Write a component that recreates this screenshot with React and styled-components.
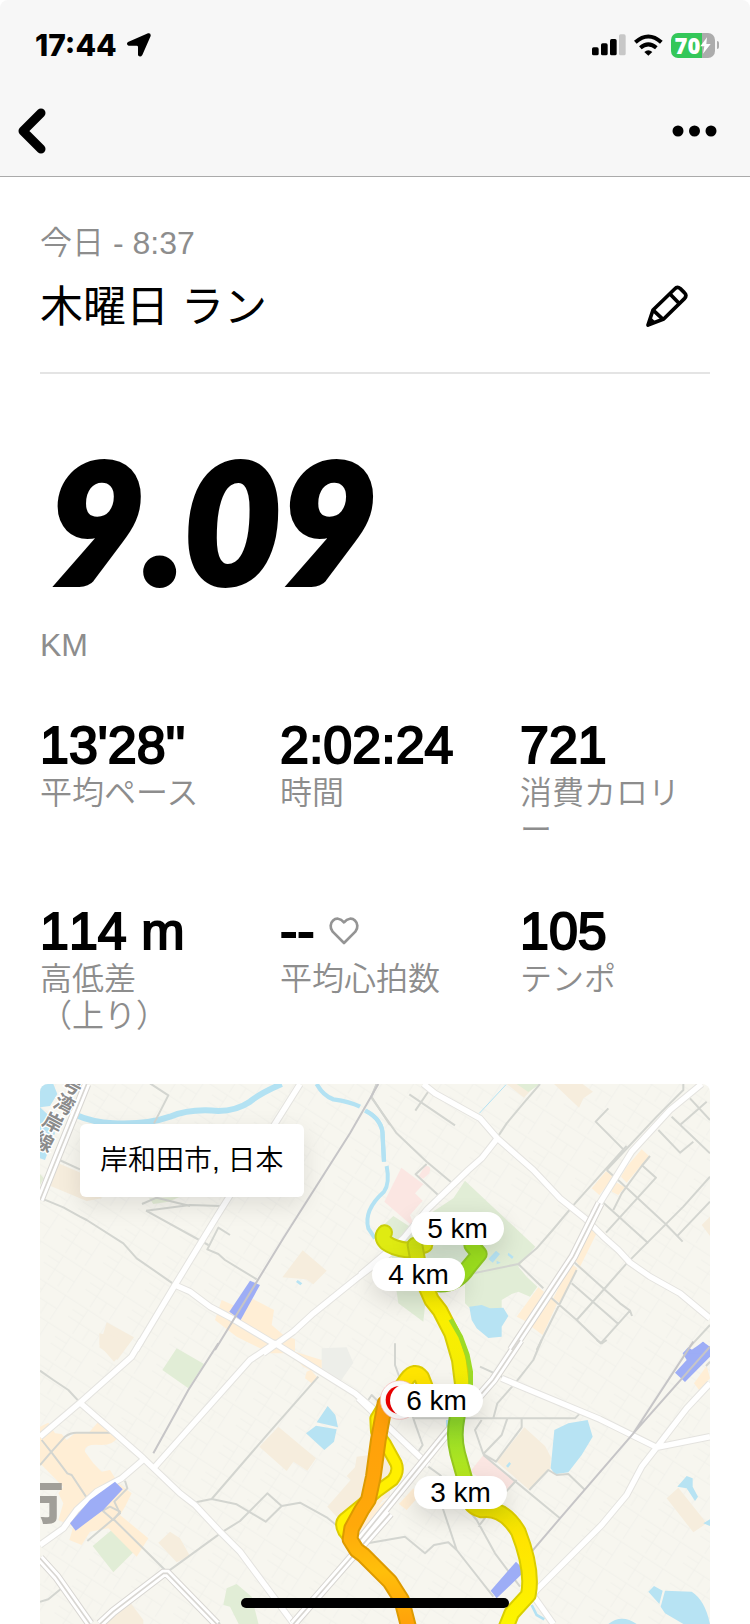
import React from "react";
import styled, { createGlobalStyle } from "styled-components";

const stats = [
  { value: "13'28''", label: "平均ペース" },
  { value: "2:02:24", label: "時間" },
  { value: "721", label: "消費カロリー" },
  { value: "114 m", label: "高低差\n（上り）" },
  { value: "--", label: "平均心拍数", heart: true },
  { value: "105", label: "テンポ" },
];

// positions on the 670 x 540 map
const markers = [
  { text: "5 km", x: 371, y: 128 },
  { text: "4 km", x: 332, y: 174 },
  { text: "6 km", x: 350, y: 300 },
  { text: "3 km", x: 374, y: 392 },
];

// the map is drawn in four sheets, each with its own origin
const sheets = {
  nw: "translate(-30 -42)",
  ne: "translate(960 -42)",
  sw: "translate(-30 768)",
  se: "translate(960 768)",
};

const areas = [
  ["nw", "#b7e3f3", "M30 42H70L82 72L60 108L30 112ZM30 112L55 135L75 190L45 270L30 265Z"],
  ["nw", "#f6eddd", "M85 280L180 320L215 385L170 393L62 348ZM818 541L890 602L850 643L828 628L757 622Z"],
  ["nw", "#f6eddd", "M230 757L312 802L262 870L208 832Z"],
  ["nw", "#e3ecd6", "M357 385L450 380L415 395L370 402ZM30 312L42 325L30 345Z"],
  ["nw", "#ffeed5", "M575 690L620 710L665 685L732 720L725 765L760 795L795 808V850H720L620 800L555 750Z"],
  ["nw", "#b7e3f3", "M803 630L817 640L811 646L798 636Z"],
  ["ne", "#fbe6e2", "M124 293L190 343L165 370L188 392L150 435L165 475L73 395ZM180 312L195 288Q217 285 208 310L190 326L175 320Z"],
  ["ne", "#e1edd6", "M315 332L526 530L475 590L500 620L532 650L510 680L475 665L455 672L425 690V720H335L315 700V600L200 660L190 755L115 700L95 560L65 470L100 438L150 470L280 385Z"],
  ["ne", "#d9e8d3", "M200 560Q210 520 250 525H320L340 560L300 610Q220 615 200 580Z"],
  ["ne", "#b7e3f3", "M328 710L365 705L390 715L430 713L445 738L425 770V800L385 804L350 775L335 750ZM408 542L420 552L398 578L385 567ZM445 548L461 560L456 567L443 555ZM410 572L422 578L410 583Z"],
  ["ne", "#ffeed5", "M738 304L762 320L718 375L695 355ZM845 238L867 258L800 338L783 320L800 290ZM765 335L795 352L775 375L755 365ZM690 475L710 490L660 590L642 565ZM632 580L652 595L600 700L580 685ZM535 652L552 665L500 755L470 740ZM575 682L592 700L548 795L515 770Z"],
  ["ne", "#f6eddd", "M582 42H668L699 65L670 85L657 113ZM1050 440V498L1025 465ZM440 42H530L492 83Z"],
  ["ne", "#e1edd6", "M470 42H540L505 66Z"],
  ["sw", "#f6eddd", "M208 -20L305 0L252 65L208 15ZM745 260L858 355L832 392L790 365L770 393L688 320ZM420 575L450 595L480 648L440 667L385 608ZM300 787L340 840V870H230V820ZM1020 345L980 350L975 382L950 408L962 420L892 500L920 530L1080 470V345Z"],
  ["sw", "#e1edd6", "M440 25L522 72L475 145L397 90ZM245 570L325 622L250 697L188 618ZM620 732L665 770L690 870H635L600 800L580 795L590 745Z"],
  ["sw", "#edeee9", "M875 25L950 22L970 68L930 125L875 105Z"],
  ["sw", "#b7e3f3", "M893 198L916 225L924 262L860 247ZM858 257L920 268L912 305L883 330L828 280Z"],
  ["sw", "#ffeed5", "M30 260L55 248L75 280L95 282L110 300L135 280H175L205 245L265 290Q250 315 215 315Q160 310 165 335L190 370L215 395L240 390L265 430L305 460L285 500L270 525L355 595L320 650L270 600L235 565L180 575L155 615L118 600L130 560L85 540L100 490L85 460L100 440L70 410L30 370ZM830 95L842 90L862 112L845 130L825 115ZM640 0L700 10L795 0V35L875 60V108L820 80L780 40L690 22ZM1000 590L1080 490V470L1000 540Z"],
  ["se", "#fbe6e2", "M370 345L467 425L445 450L400 440L330 395Z"],
  ["se", "#f6eddd", "M493 262L555 318L572 350V385L508 450L410 365ZM955 443L1040 550L1000 577L920 475Z"],
  ["se", "#ffeed5", "M160 445L175 470L140 510L117 492ZM0 530L45 455L75 470L0 575ZM1040 78L1050 115L1017 150L1002 130Z"],
  ["se", "#b7e3f3", "M683 240L698 290L665 345L625 397L585 403L572 385L583 270L625 250ZM980 408L998 415V440L1014 470L1005 483L980 445L952 440ZM882 738L908 752L898 792L865 755ZM915 752L995 755Q1035 780 1050 852H970L915 820L902 800ZM745 852Q785 820 830 852ZM438 378L448 366L453 371L444 383ZM258 240H268V268H258ZM1030 550L1050 538V558Z"],
];

// quiet side streets
const streets = [
  ["nw", "M360 40L415 76L372 160M88 270L150 298M336 402L380 383L480 408M42 388L100 412L150 440L170 450L280 520L320 565L428 640M348 422L480 405L570 408M348 422L535 525M600 495L565 473L532 538L565 552L585 570L680 628"],
  ["nw", "M1040 42L1024 80L1080 165"],
  ["ne", "M50 42L34 82L110 190L200 275L280 342M200 282L167 313L240 380M148 73L285 166M208 60L166 122M540 42L490 100L440 160L410 205M745 115L707 155L790 238L645 400L578 480L530 535L475 582L340 610M970 42V60L890 140L740 300"],
  ["ne", "M475 582L550 655M790 238L800 228M740 300L780 335L920 465L968 515M1050 150L990 85M935 140L1050 250M895 180L960 248L1000 215M1040 95L960 165M870 258L845 288L785 370L760 420M845 285L888 323L738 488M730 398L865 520M1050 320L970 410L800 580L730 660L650 750M1050 395L950 500M635 570L780 700L810 722L722 820L650 750L570 680M635 640L775 762M650 600L590 720L530 840M1050 765L990 830M810 722L816 738M460 840L500 780"],
  ["sw", "M30 92L70 120L115 150L150 188M30 375L60 340L105 290Q120 278 140 278H245M35 300L65 338L112 400L125 405L168 470M490 488L545 477L620 493L707 545L755 498L712 460L630 543L575 577L410 697M755 498L810 488L890 532L925 560M545 477L715 280L865 110M30 785L55 778L95 745M250 537L172 603M250 537L412 697L570 852M218 512L240 500L270 515L250 540Z"],
  ["sw", "M285 422L292 445L253 485L270 520L250 537M1015 180L1025 165L1045 185"],
  ["se", "M105 10V75L125 130L165 250L188 315L175 335M205 380L240 405L350 540L405 640L480 740M160 235H645L660 220M400 235L412 190L465 130L520 60L545 0M485 235V262L408 365L370 342L345 270L365 240M442 235L425 285L370 342M360 80L470 130M370 345L600 535M508 450L565 390L590 405L625 402L675 450M10 612L135 590L195 640L222 615L265 607L290 630L400 770M240 480L290 630M355 560L420 475L470 420M710 0L725 10L740 0M1050 65L1038 78"],
];

const roads = [
  ["nw", "M810 42L560 440L435 645L318 840M435 645L480 665L540 710L600 742L730 820M700 850L790 785L850 730L980 625L1080 550"],
  ["ne", "M190 42L225 70L360 145L412 205L520 300L600 385L675 445L730 500L775 540L810 578L870 620L960 670L1050 745M412 205L365 265L325 300L200 420L130 505L0 615"],
  ["ne", "M1025 42L930 120L815 245L750 350L700 430"],
  ["sw", "M335 0L305 50L150 188L30 290M150 188L250 275L340 355L450 460L495 495L570 575L630 635L790 850M375 380L660 60L735 10L975 160L1040 215M345 355L275 415L200 455L140 510L100 565L30 615"],
  ["se", "M-5 175L205 375M425 115L520 155L720 238L890 322L1050 290M1050 130L980 205L890 322L845 380L800 465L725 555L530 750L490 800M515 760L580 852"],
];

const highways = [
  ["nw", "M170 42L90 240L30 390"],
  ["ne", "M720 400L640 560L455 840"],
  ["sw", "M30 655L80 710L180 852M210 852L250 815L400 700L412 700L560 852M790 852L1080 520"],
  ["se", "M0 600L260 280L400 120L480 0"],
];

const rails = [
  ["nw", "M1045 42L960 190L760 505L555 840"],
  ["sw", "M565 10L475 150L370 340"],
  ["se", "M1000 5L820 280L600 535L515 635M1050 20L820 280"],
];

const rivers = [
  ["nw", 18, "M130 132Q190 158 250 160Q350 165 420 140Q480 115 565 123Q620 122 660 95Q690 70 755 42"],
  ["nw", 13, "M860 42Q880 78 910 88Q960 95 990 110M1005 122Q1060 150 1058 200L1062 275"],
  ["ne", 12, "M18 122Q70 150 68 200L72 275M80 288Q90 340 72 365Q10 420 25 475L45 505"],
  ["ne", 3, "M438 44L358 130"],
  ["se", 8, "M515 795L530 825L553 838"],
];

const stations = [
  ["nw", "M660 632L690 645L632 750L598 725Z"],
  ["sw", "M255 425L278 448L220 510L137 572L120 550L180 480Z"],
  ["se", "M1028 5L1050 20V50L975 126L945 98L980 60L968 40L985 22L1000 32ZM468 665L488 685V700L410 775L392 752Z"],
  ["ne", "M1030 815L1050 835V850H980Z"],
];

const hook = "M74 488Q62 502 78 518Q100 535 140 540Q165 535 195 525";
const green = "M335 525L358 552L325 592Q290 645 235 642";
const main =
  "M165 -285L180 -200L215 -120L240 -88L275 -20L298 60L308 140L291 235Q280 290 293 340L318 430Q318 500 365 510Q430 500 475 575Q520 690 505 765L455 820L435 870";
const orange =
  "M148 870L125 780L90 725L10 645L-10 630L-30 598L-25 565L5 510L25 480L40 410L55 300L75 190";
const loop =
  "M75 190L48 235L50 275L75 310L108 370Q118 395 98 420L50 455L10 490L-45 535Q-62 550 -48 575L-20 610";
const tip = "M115 155L140 118Q165 85 185 112L200 150";

const Layer = ({ items, ...rest }) =>
  items.map(([sheet, d], i) => (
    <path key={i} d={d} transform={sheets[sheet]} fill="none" {...rest} />
  ));

const Track = ({ d, edge, color, width = 38 }) => (
  <g fill="none" strokeLinecap="round" strokeLinejoin="round">
    <path d={d} stroke={edge} strokeWidth={width + 12} />
    <path d={d} stroke={color} strokeWidth={width} />
  </g>
);

const MapDrawing = () => (
  <MapSvg viewBox="0 0 2010 1620" aria-hidden="true">
    <defs>
      <pattern id="blocks" width="150" height="96" patternUnits="userSpaceOnUse" patternTransform="rotate(33)">
        <path d="M0 10H150M40 10V96M0 58H110M110 10V96M75 58V96M0 34H40" fill="none" stroke="#efeee8" strokeWidth="2" />
      </pattern>
      <linearGradient id="main" gradientUnits="userSpaceOnUse" x1="0" y1="-285" x2="0" y2="860">
        <stop offset="0" stopColor="#cfe312" />
        <stop offset="0.15" stopColor="#fcf000" />
        <stop offset="0.36" stopColor="#f3ec04" />
        <stop offset="0.46" stopColor="#8fd92a" />
        <stop offset="0.6" stopColor="#b5e81e" />
        <stop offset="0.68" stopColor="#e6e000" />
        <stop offset="0.77" stopColor="#ffe400" />
        <stop offset="1" stopColor="#fcf600" />
      </linearGradient>
      <linearGradient id="main-edge" gradientUnits="userSpaceOnUse" x1="0" y1="-285" x2="0" y2="860">
        <stop offset="0" stopColor="#bccb12" />
        <stop offset="0.15" stopColor="#dccd00" />
        <stop offset="0.36" stopColor="#d2cc08" />
        <stop offset="0.46" stopColor="#7fc22b" />
        <stop offset="0.6" stopColor="#9dca1a" />
        <stop offset="0.7" stopColor="#dccb00" />
        <stop offset="1" stopColor="#d8d000" />
      </linearGradient>
      <linearGradient id="orange" gradientUnits="userSpaceOnUse" x1="0" y1="190" x2="0" y2="860">
        <stop offset="0" stopColor="#ff9e0a" />
        <stop offset="0.55" stopColor="#ffa90a" />
        <stop offset="0.75" stopColor="#ffbf0a" />
        <stop offset="1" stopColor="#ffa00a" />
      </linearGradient>
    </defs>
    <rect width="2010" height="1620" fill="#f7f6ef" />
    <rect width="2010" height="1620" fill="url(#blocks)" />
    {areas.map(([sheet, fill, d], i) => (
      <path key={i} d={d} fill={fill} transform={sheets[sheet]} />
    ))}
    {rivers.map(([sheet, width, d], i) => (
      <path key={i} d={d} fill="none" stroke="#b3e2f3" strokeWidth={width} transform={sheets[sheet]} />
    ))}
    <Layer items={streets} stroke="#d3d5d0" strokeWidth="6" strokeLinejoin="round" />
    <Layer items={roads} stroke="#e4e3df" strokeWidth="22" strokeLinejoin="round" />
    <Layer items={roads} stroke="#ffffff" strokeWidth="16" strokeLinejoin="round" />
    <Layer items={stations} style={{ fill: "#9dadf6" }} />
    <Layer items={rails} stroke="#c6c5c7" strokeWidth="6" />
    <Layer items={highways} stroke="#d8d6d2" strokeWidth="28" />
    <Layer items={highways} stroke="#ffffff" strokeWidth="22" />
    <Layer items={highways} stroke="#d8d6d2" strokeWidth="5" />

    <g transform={sheets.nw}>
      <RoadName transform="rotate(28 125 46)" x="97" y="66">号</RoadName>
      <RoadName transform="rotate(28 102 102)" x="73" y="124">湾</RoadName>
      <RoadName transform="rotate(28 68 158)" x="39" y="180">岸</RoadName>
      <RoadName transform="rotate(28 40 215)" x="11" y="237">線</RoadName>
    </g>
    <g transform={sheets.sw}>
      <CityName x="-76" y="558">市</CityName>
    </g>

    <g transform={sheets.ne}>
      <Track d={green} edge="#8fc924" color="#9de01f" />
      <Track d={hook} edge="#c9cf0b" color="#dfeb12" />
    </g>
    <g transform={sheets.se}>
      <Track d={main} edge="url(#main-edge)" color="url(#main)" />
      <path d="M272 -62L302 -10L322 45L332 95L332 140" fill="none" stroke="#9ddb27" strokeWidth="14" />
      <Track d={tip} edge="#dccb00" color="#ffe500" />
      <Track d={loop} edge="#dccb00" color="#fff000" width={28} />
      <Track d={orange} edge="#dd9a00" color="url(#orange)" />
      <circle cx="119" cy="180" r="58" fill="#ffffff" stroke="#f7b5b5" strokeWidth="2" />
      <circle cx="119" cy="180" r="42" fill="#ef0000" />
      <circle cx="138" cy="180" r="42" fill="#ffffff" />
    </g>
  </MapSvg>
);

const App = () => {
  return (
    <Screen>
      <GlobalStyle />
      <Header>
        <StatusBar>
          <Clock>
            17:44
            <svg width="24" height="24" viewBox="0 0 72 72" aria-hidden="true">
              <path d="M63 1Q72 -1 71 9L46 66Q40 75 33 67V42Q33 38 29 38H5Q-4 33 3 27Z" />
            </svg>
          </Clock>
          <Indicators>
            <svg width="34" height="22" viewBox="0 0 102 66" aria-hidden="true">
              <rect x="0" y="40" width="20" height="24" rx="5" />
              <rect x="27" y="28" width="20" height="36" rx="5" />
              <rect x="54" y="15" width="20" height="49" rx="5" />
              <rect x="81" y="1" width="20" height="63" rx="5" fill="#c7c7c7" />
            </svg>
            <svg width="29" height="22" viewBox="0 0 87 66" aria-hidden="true">
              <g fill="none" stroke="#000" strokeWidth="12">
                <path d="M4 25Q43 -10 82 25" />
                <path d="M19 41Q43 21 67 41" />
              </g>
              <path d="M31 54Q43 44 55 54L43 65Z" />
            </svg>
            <BatteryWrap>
              <Battery>
                70
                <svg width="11" height="17" viewBox="0 0 33 51" aria-hidden="true">
                  <path d="M21 1L1 28H13L9 50L32 21H19Z" fill="#fff" />
                </svg>
              </Battery>
              <BatteryNub />
            </BatteryWrap>
          </Indicators>
        </StatusBar>
        <NavBar>
          <IconButton aria-label="戻る">
            <svg width="28" height="46" viewBox="0 0 28 46">
              <path d="M23 5L5 23L23 41" fill="none" stroke="#000" strokeWidth="9" strokeLinecap="round" strokeLinejoin="round" />
            </svg>
          </IconButton>
          <IconButton aria-label="メニュー">
            <svg width="45" height="12" viewBox="0 0 45 12">
              <circle cx="6" cy="6" r="5.5" />
              <circle cx="22.5" cy="6" r="5.5" />
              <circle cx="39" cy="6" r="5.5" />
            </svg>
          </IconButton>
        </NavBar>
      </Header>

      <Content>
        <RunInfo>
          <div>
            <RunDate>今日 - 8:37</RunDate>
            <RunTitle>木曜日 ラン</RunTitle>
          </div>
          <IconButton aria-label="編集">
            <svg width="44" height="44" viewBox="30 28 132 132">
              <g fill="none" stroke="#000" strokeWidth="11" strokeLinejoin="round">
                <path d="M39 151L54 106L119 43Q127 34 136 42L148 54Q157 62 149 71L86 133Z" />
                <path d="M105 58L132 86M56 108L84 134" />
              </g>
              <path d="M39 151L47 127L62 142Z" />
            </svg>
          </IconButton>
        </RunInfo>

        <Distance>9.09</Distance>
        <Unit>KM</Unit>

        <StatGrid>
          {stats.map((item) => (
            <div key={item.label}>
              <StatValue>
                {item.value}
                {item.heart && (
                  <svg width="30" height="28" viewBox="0 0 90 84" aria-hidden="true">
                    <path
                      d="M45 78L11 44C-8 20 22 -12 45 16C68 -12 98 20 79 44Z"
                      fill="none"
                      stroke="#949494"
                      strokeWidth="8"
                      strokeLinejoin="round"
                    />
                  </svg>
                )}
              </StatValue>
              <StatLabel>{item.label}</StatLabel>
            </div>
          ))}
        </StatGrid>

        <MapCard>
          <MapDrawing />
          <CityTag>岸和田市, 日本</CityTag>
          {markers.map((m) => (
            <Marker key={m.text} $x={m.x} $y={m.y}>
              {m.text}
            </Marker>
          ))}
        </MapCard>
      </Content>
      <HomeIndicator />
    </Screen>
  );
};

const GlobalStyle = createGlobalStyle`
  * {
    box-sizing: border-box;
  }
  body {
    margin: 0;
    background: #fff;
    color: #000;
    font-family: "Liberation Sans", "Noto Sans CJK JP", sans-serif;
  }
  svg {
    display: block;
  }
`;

const Screen = styled.main`
  min-height: 100vh;
`;

const Header = styled.header`
  height: 177px;
  background-color: #f7f7f7;
  border-bottom: 1px solid #aaa;
  border-radius: 8px 8px 0 0;
`;

const StatusBar = styled.div`
  display: flex;
  align-items: center;
  justify-content: space-between;
  height: 90px;
  padding: 0 31px 0 35px;
`;

const Clock = styled.div`
  display: flex;
  align-items: center;
  gap: 10px;
  font-family: Inter, sans-serif;
  font-size: 30px;
  font-weight: 800;
`;

const Indicators = styled.div`
  display: flex;
  align-items: center;
  gap: 8px;
`;

const BatteryWrap = styled.div`
  display: flex;
  align-items: center;
  gap: 2px;
`;

const Battery = styled.div`
  display: flex;
  align-items: center;
  justify-content: center;
  width: 44px;
  height: 25px;
  border-radius: 7px;
  background: linear-gradient(to right, #34c759 70%, #acacac 70%);
  color: #fff;
  font-family: "Open Sans", sans-serif;
  font-size: 22px;
  font-weight: 800;
`;

const BatteryNub = styled.div`
  width: 2px;
  height: 8px;
  border-radius: 0 2px 2px 0;
  background-color: #acacac;
`;

const NavBar = styled.nav`
  display: flex;
  align-items: center;
  justify-content: space-between;
  height: 82px;
  padding: 0 33px 0 18px;
`;

const IconButton = styled.button`
  display: flex;
  padding: 0;
  border: none;
  background: none;
`;

const Content = styled.div`
  padding: 44px 40px 0;
`;

const RunInfo = styled.section`
  display: flex;
  align-items: flex-end;
  justify-content: space-between;
  padding: 0 21px 44px 0;
  border-bottom: 2px solid #e4e4e4;
`;

const RunDate = styled.p`
  margin: 0;
  color: #8d8d8d;
  font-size: 32px;
  font-weight: 350;
  line-height: 44px;
`;

const RunTitle = styled.h1`
  margin: 12px 0 -9px;
  font-size: 43px;
  font-weight: 400;
  line-height: 60px;
`;

const Distance = styled.p`
  margin: 0;
  padding: 56px 0 0 8px;
  font-family: Lato, sans-serif;
  font-size: 166px;
  font-style: italic;
  font-weight: 900;
  line-height: 180px;
  -webkit-text-stroke: 6px #000;
`;

const Unit = styled.p`
  margin: 17px 0 0;
  color: #8d8d8d;
  font-size: 32px;
  line-height: 37px;
`;

const StatGrid = styled.section`
  display: grid;
  grid-template-columns: repeat(3, 1fr);
  column-gap: 50px;
  row-gap: 52px;
  margin-top: 51px;
`;

const StatValue = styled.div`
  display: flex;
  align-items: center;
  gap: 14px;
  font-size: 52px;
  font-kerning: none;
  line-height: 60px;
  white-space: nowrap;
  /* medium weight */
  -webkit-text-stroke: 2px #000;
`;

const StatLabel = styled.div`
  color: #8d8d8d;
  font-size: 32px;
  font-weight: 350;
  line-height: 37px;
  white-space: pre-line;
`;

const MapCard = styled.section`
  position: relative;
  margin-top: 49px;
  border-radius: 8px 8px 0 0;
  overflow: hidden;
`;

const MapSvg = styled.svg`
  width: 100%;
`;

const RoadName = styled.text`
  font-family: "Noto Sans CJK JP", sans-serif;
  font-size: 60px;
  font-weight: 700;
  fill: #8b8b8b;
  stroke: #fff;
  stroke-width: 8px;
  paint-order: stroke;
`;

const CityName = styled.text`
  font-family: "Noto Sans CJK JP", sans-serif;
  font-size: 178px;
  font-weight: 700;
  fill: #a19f99;
`;

const CityTag = styled.div`
  position: absolute;
  top: 40px;
  left: 40px;
  padding: 0 20px;
  border-radius: 6px;
  background-color: #fff;
  box-shadow: 0 8px 24px rgba(0, 0, 0, 0.1);
  font-size: 28px;
  font-weight: 350;
  line-height: 73px;
`;

const Marker = styled.div`
  position: absolute;
  left: ${({ $x }) => ($x / 670) * 100}%;
  top: ${({ $y }) => ($y / 540) * 100}%;
  width: 93px;
  border-radius: 17px;
  background-color: #fff;
  box-shadow: 0 8px 24px rgba(0, 0, 0, 0.14);
  font-size: 28px;
  line-height: 33px;
  text-align: center;
`;

const HomeIndicator = styled.div`
  position: fixed;
  bottom: 16px;
  left: 50%;
  width: 268px;
  height: 10px;
  margin-left: -134px;
  border-radius: 5px;
  background-color: #000;
`;

export default App;
